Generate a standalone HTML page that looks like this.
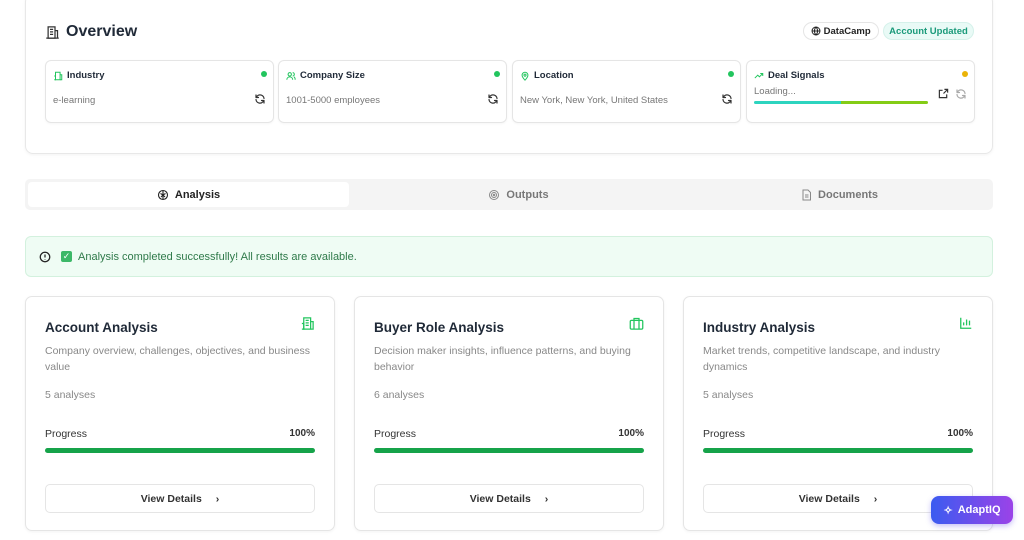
<!DOCTYPE html>
<html><head><meta charset="utf-8">
<style>
*{box-sizing:border-box;margin:0;padding:0}
body{width:1024px;height:540px;overflow:hidden;background:#fff;font-family:"Liberation Sans",sans-serif;color:#1f2937;position:relative}
.ov{position:absolute;left:25px;top:-6px;width:968px;height:160px;border:1px solid #e8e8e8;border-radius:8px;box-shadow:0 1px 3px rgba(0,0,0,.05)}
.title{position:absolute;left:19px;top:28px;font-size:16px;font-weight:bold;color:#1f2937;display:flex;align-items:center;gap:6px}
.pill{position:absolute;top:27px;height:18px;border-radius:9px;font-size:9.5px;font-weight:bold;display:flex;align-items:center;padding:0 7px;white-space:nowrap}
.mini{position:absolute;top:65px;width:229px;height:63px;border:1px solid #e5e5e5;border-radius:6px;box-shadow:0 1px 2px rgba(0,0,0,.04)}
.mini .h{position:absolute;left:7px;top:9px;font-size:9.5px;font-weight:bold;display:flex;align-items:center;gap:4px}
.mini .dot{position:absolute;right:6px;top:10px;width:6px;height:6px;border-radius:50%;background:#22c55e}
.mini .v{position:absolute;left:7px;top:34px;font-size:9.5px;color:#777}
.mini .r{position:absolute;right:7px;top:32px;display:flex;gap:6px}
.tabs{position:absolute;left:25px;top:179px;width:968px;height:31px;background:#f4f4f4;border-radius:5px}
.tab{position:absolute;top:3px;height:25px;width:321px;display:flex;align-items:center;justify-content:center;gap:6px;font-size:11px;color:#777;font-weight:bold}
.alert{position:absolute;left:25px;top:236px;width:968px;height:41px;background:#effcf4;border:1px solid #d3f1de;border-radius:6px;font-size:11px;color:#2f7a4a;display:flex;align-items:center;padding-left:13px;gap:6px}
.card{position:absolute;top:296px;width:310px;height:235px;border:1px solid #e5e5e5;border-radius:7px;box-shadow:0 1px 3px rgba(0,0,0,.05)}
.card h3{position:absolute;left:19px;top:23px;font-size:13.5px;color:#1f2937}
.card .ic{position:absolute;right:19px;top:19px}
.card .d{position:absolute;left:19px;top:47px;width:280px;font-size:10.5px;line-height:15.5px;color:#888}
.card .n{position:absolute;left:19px;top:92px;font-size:10.5px;color:#888}
.card .p{position:absolute;left:19px;right:19px;top:131px;font-size:10.5px;color:#333;display:flex;justify-content:space-between}
.card .p b{font-size:10px}
.card .bar{position:absolute;left:19px;right:19px;top:151px;height:5px;border-radius:3px;background:#16a34a}
.card .btn{position:absolute;left:19px;right:19px;top:187px;height:29px;border:1px solid #e5e5e5;border-radius:5px;display:flex;align-items:center;justify-content:center;gap:14px;font-size:10.5px;font-weight:bold;color:#333}
.aiq{position:absolute;left:931px;top:496px;width:82px;height:28px;border-radius:8px;background:linear-gradient(90deg,#3b5bf0,#9b43e8);color:#fff;font-size:11px;font-weight:bold;display:flex;align-items:center;justify-content:center;gap:5px;box-shadow:0 2px 6px rgba(90,70,230,.35)}
</style></head><body>
<svg width="0" height="0" style="position:absolute"><defs><symbol id="rf" viewBox="0 0 24 24"><path d="M20 11a8 8 0 0 0-14-4.5L4 9M4 4v5h5M4 13a8 8 0 0 0 14 4.5l2-2.5M20 20v-5h-5" fill="none" stroke="currentColor" stroke-width="2.4" stroke-linecap="round" stroke-linejoin="round"/></symbol></defs></svg>
<div class="ov">
 <div class="title"><svg width="15" height="15" viewBox="0 0 24 24" fill="none" stroke="#333" stroke-width="2"><rect x="5" y="3" width="11" height="18"/><path d="M16 9h4v12h-4M2 21h20M8 7h5M8 11h5M8 15h5"/></svg>Overview</div>
 <div class="pill" style="left:777px;border:1px solid #e5e5e5;color:#222"><svg width="10" height="10" viewBox="0 0 24 24" fill="none" stroke="#222" stroke-width="2.4"><circle cx="12" cy="12" r="9.5"/><path d="M2.5 12h19M12 2.5c-5 5-5 14 0 19M12 2.5c5 5 5 14 0 19"/></svg>&nbsp;DataCamp</div>
 <div class="pill" style="left:857px;width:91px;padding:0 2px;justify-content:center;background:#e9faf6;border:1px solid #d5f1ea;color:#1a9a7a">Account Updated</div>
 <div class="mini" style="left:19px"><div class="h"><svg width="10" height="10" viewBox="0 0 24 24" fill="none" stroke="#22c55e" stroke-width="2.4"><rect x="6" y="3" width="11" height="18"/><path d="M17 9h4v12h-4M3 12h3v9H3"/></svg>Industry</div><div class="dot"></div><div class="v">e-learning</div><div class="r"><svg width="12" height="12" style="color:#333"><use href="#rf"/></svg></div></div>
 <div class="mini" style="left:252px"><div class="h"><svg width="10" height="10" viewBox="0 0 24 24" fill="none" stroke="#22c55e" stroke-width="2.4"><circle cx="9" cy="8" r="4"/><path d="M2 21c0-4 3-7 7-7s7 3 7 7M16 4a4 4 0 0 1 0 8M19 14c2 1 3 4 3 7"/></svg>Company Size</div><div class="dot"></div><div class="v">1001-5000 employees</div><div class="r"><svg width="12" height="12" style="color:#333"><use href="#rf"/></svg></div></div>
 <div class="mini" style="left:486px"><div class="h"><svg width="10" height="10" viewBox="0 0 24 24" fill="none" stroke="#22c55e" stroke-width="2.4"><path d="M12 22s-7-7-7-12a7 7 0 0 1 14 0c0 5-7 12-7 12z"/><circle cx="12" cy="10" r="2.5"/></svg>Location</div><div class="dot"></div><div class="v">New York, New York, United States</div><div class="r"><svg width="12" height="12" style="color:#333"><use href="#rf"/></svg></div></div>
 <div class="mini" style="left:720px"><div class="h"><svg width="10" height="10" viewBox="0 0 24 24" fill="none" stroke="#22c55e" stroke-width="2.4"><path d="M2 17l7-7 4 4 8-8M15 6h6v6"/></svg>Deal Signals</div><div class="dot" style="background:#eab308"></div><div class="v" style="top:25px">Loading...</div><div style="position:absolute;left:7px;top:40px;width:174px;height:3px;background:linear-gradient(90deg,#2dd4bf 50%,#84cc16 50%);border-radius:2px"></div><div class="r" style="top:27px"><svg width="11" height="11" viewBox="0 0 24 24" fill="none" stroke="#333" stroke-width="2.6"><path d="M14 3h7v7M21 3l-9 9M19 14v7H3V5h7"/></svg><svg width="12" height="12" style="color:#aaa"><use href="#rf"/></svg></div></div>
</div>
<div class="tabs">
 <div class="tab" style="left:3px;background:#fff;border-radius:4px;color:#222"><svg width="12" height="12" viewBox="0 0 24 24" fill="none" stroke="#222" stroke-width="2.2"><circle cx="12" cy="12" r="9"/><path d="M12 3v18M7 9l5 3 5-3M8 16l4-4 4 4"/></svg>Analysis</div>
 <div class="tab" style="left:333px"><svg width="12" height="12" viewBox="0 0 24 24" fill="none" stroke="#888" stroke-width="2"><circle cx="12" cy="12" r="9"/><circle cx="12" cy="12" r="5"/><circle cx="12" cy="12" r="1.5"/></svg>Outputs</div>
 <div class="tab" style="left:654px"><svg width="11" height="12" viewBox="0 0 20 24" fill="none" stroke="#888" stroke-width="2"><path d="M3 2h10l5 5v15H3zM7 12h7M7 16h7"/></svg>Documents</div>
</div>
<div class="alert"><svg width="12" height="12" viewBox="0 0 24 24" fill="none" stroke="#222" stroke-width="2.5"><circle cx="12" cy="12" r="9.5"/><path d="M12 7v6M12 16v1"/></svg><span style="display:inline-block;width:11px;height:11px;background:#3cb868;border-radius:2px;color:#fff;font-size:9px;line-height:11px;text-align:center;margin-left:4px">✓</span>Analysis completed successfully! All results are available.</div>

<div class="card" style="left:25px"><h3>Account Analysis</h3><div class="ic"><svg width="15" height="15" viewBox="0 0 24 24" fill="none" stroke="#22c55e" stroke-width="2"><rect x="6" y="3" width="11" height="18"/><path d="M17 9h4v12h-4M3 12h3v9H3M9 7h5M9 11h5M9 15h5"/></svg></div><div class="d">Company overview, challenges, objectives, and business value</div><div class="n">5 analyses</div><div class="p"><span>Progress</span><b>100%</b></div><div class="bar"></div><div class="btn">View Details <span>›</span></div></div>
<div class="card" style="left:354px"><h3>Buyer Role Analysis</h3><div class="ic"><svg width="15" height="15" viewBox="0 0 24 24" fill="none" stroke="#22c55e" stroke-width="2"><rect x="2" y="7" width="20" height="14" rx="2"/><path d="M8 7V4h8v3M8 7v14M16 7v14"/></svg></div><div class="d">Decision maker insights, influence patterns, and buying behavior</div><div class="n">6 analyses</div><div class="p"><span>Progress</span><b>100%</b></div><div class="bar"></div><div class="btn">View Details <span>›</span></div></div>
<div class="card" style="left:683px"><h3>Industry Analysis</h3><div class="ic"><svg width="14" height="14" viewBox="0 0 24 24" fill="none" stroke="#22c55e" stroke-width="2.2"><path d="M3 3v18h18M8 16v-5M13 16V6M18 16v-8"/></svg></div><div class="d">Market trends, competitive landscape, and industry dynamics</div><div class="n">5 analyses</div><div class="p"><span>Progress</span><b>100%</b></div><div class="bar"></div><div class="btn">View Details <span>›</span></div></div>

<div class="aiq"><span>✧</span>AdaptIQ</div>
</body></html>
